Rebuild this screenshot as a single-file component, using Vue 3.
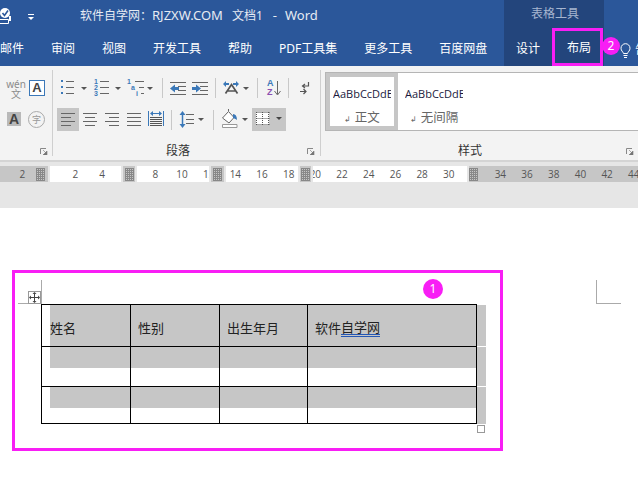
<template>
  <div class="word">
    <!-- title bar and tabs -->
    <header class="top">
      <div class="top-main">
        <div class="title-row">
          <svg class="qat" width="80" height="33" viewBox="0 0 80 33">
            <circle cx="5" cy="13" r="5" fill="#fff" />
            <path d="M2.5 13l2 2.5 3.5-5" fill="none" stroke="#2b579a" stroke-width="1.6" />
            <path d="M0 19.5h8.5v4H0" fill="none" stroke="#fff" />
            <path d="M9 16h2v5H9z" fill="#fff" />
            <path d="M28 14h6v1h-6z" fill="#fff" />
            <path d="M28 17h6l-3 3z" fill="#fff" />
          </svg>
          <span class="title">软件自学网：<span class="latin">RJZXW.COM</span><span class="doc-name">文档1</span><span class="latin dash">-</span><span class="latin">Word</span></span>
        </div>
        <nav class="tabs">
          <span v-for="t in tabs" :key="t" class="tab">{{ t }}</span>
        </nav>
      </div>

      <div class="context">
        <div class="context-title">表格工具</div>
        <div class="context-tabs">
          <span class="tab design">设计</span>
          <span class="tab layout-tab">
            布局
            <i class="badge badge-two">2</i>
          </span>
        </div>
      </div>

      <div class="tell">
        <svg width="11" height="16" viewBox="0 0 11 16">
          <path d="M3.5 10.5C3 8.500 1 8 1 5.200a4.500 4.500 0 0 1 9 0C10 8 8 8.500 7.500 10.500z" fill="none" stroke="#fff" />
          <path d="M3.500 12.500h4M4 14.500h3" stroke="#fff" />
        </svg>
        <span class="tell-text">告诉我</span>
      </div>
    </header>

    <!-- ribbon -->
    <section class="ribbon">
      <div class="group font-group">
        <div class="tool-row first">
          <span class="wen"><b>wén</b><em>文</em></span>
          <span class="char-box">A</span>
        </div>
        <div class="tool-row">
          <span class="char-shade">A</span>
          <span class="char-circle">字</span>
        </div>
        <div class="group-foot">
          <span></span><span></span>
          <svg class="launcher" width="8" height="7" viewBox="0 0 8 7">
            <path d="M.5 6V.5H6" fill="none" stroke="#888" />
            <path d="M3 2l3 3M7 3v4H3z" fill="#777" stroke="#777" stroke-width=".6" />
          </svg>
        </div>
      </div>

      <div class="group para-group">
        <div class="tool-row first">
          <svg width="34" height="23" viewBox="0 0 34 23">
            <path d="M5 4h2v2H5zM5 10h2v2H5zM5 16h2v2H5z" fill="#3b78b8" />
            <path d="M10 5.500h8M10 11.500h8M10 17.500h8" stroke="#666" />
            <path d="M25 11h6l-3 3z" fill="#555" />
          </svg>
          <svg width="34" height="23" viewBox="0 0 34 23">
            <text class="mini" x="4" y="8">1</text>
            <text class="mini" x="4" y="14">2</text>
            <text class="mini" x="4" y="20">3</text>
            <path d="M10 5.500h9M10 11.500h9M10 17.500h9" stroke="#666" />
            <path d="M25 11h6l-3 3z" fill="#555" />
          </svg>
          <svg width="34" height="23" viewBox="0 0 34 23">
            <text class="mini" x="3" y="8">1</text>
            <text class="mini" x="7" y="14">a</text>
            <text class="mini" x="12" y="20">i</text>
            <path d="M11 5.500h9M15 11.500h5M17 17.500h3" stroke="#666" />
            <path d="M23 11h6l-3 3z" fill="#555" />
          </svg>
          <svg width="8" height="23" viewBox="0 0 8 23"><path d="M4.500 2v20" stroke="#c8c8c8" /></svg>
          <svg width="23" height="23" viewBox="0 0 23 23">
            <path d="M4 6.500h16M12 10.500h8M12 14.500h8M4 18.500h16" stroke="#666" />
            <path d="M4 12.500l5-4v2.500h4v3H9v2.500z" fill="#3b78b8" />
          </svg>
          <svg width="22" height="23" viewBox="0 0 22 23">
            <path d="M3 6.500h16M11 10.500h8M11 14.500h8M3 18.500h16" stroke="#666" />
            <path d="M12 12.500l-5-4v2.500H3v3h4v2.500z" fill="#3b78b8" />
          </svg>
          <svg width="8" height="23" viewBox="0 0 8 23"><path d="M4.500 2v20" stroke="#c8c8c8" /></svg>
          <svg width="34" height="23" viewBox="0 0 34 23">
            <path d="M6.500 17.500l6-9 6 9M8.500 15h8" fill="none" stroke="#555" stroke-width="1.700" />
            <path d="M4 8l3-3v2h3v2H7v2zM20 8l-3-3v2h-3v2h3v2z" fill="#3b78b8" />
            <path d="M24 11h6l-3 3z" fill="#555" />
          </svg>
          <svg width="8" height="23" viewBox="0 0 8 23"><path d="M4.500 2v20" stroke="#c8c8c8" /></svg>
          <svg width="23" height="23" viewBox="0 0 23 23">
            <text class="sort-a" x="6" y="10">A</text>
            <text class="sort-z" x="6" y="19">Z</text>
            <path d="M16.500 5v13" stroke="#666" />
            <path d="M13.500 15l3 4 3-4" fill="none" stroke="#666" />
          </svg>
          <svg width="8" height="23" viewBox="0 0 8 23"><path d="M4.500 2v20" stroke="#c8c8c8" /></svg>
          <svg width="24" height="23" viewBox="0 0 24 23">
            <path d="M16.500 6v4H11M13 8l-2.500 2 2.500 2" fill="none" stroke="#555" stroke-width="1.200" />
            <path d="M8 15.500h6M11.500 13l2.500 2.500-2.500 2.500" fill="none" stroke="#555" stroke-width="1.200" />
          </svg>
        </div>

        <div class="tool-row">
          <svg class="on" width="22" height="23" viewBox="0 0 22 23">
            <path d="M4 5.500h14M4 9.500h10M4 13.500h14M4 17.500h10" stroke="#666" />
          </svg>
          <svg width="22" height="23" viewBox="0 0 22 23">
            <path d="M4 5.500h14M6 9.500h10M4 13.500h14M6 17.500h10" stroke="#666" />
          </svg>
          <svg width="22" height="23" viewBox="0 0 22 23">
            <path d="M4 5.500h14M8 9.500h10M4 13.500h14M8 17.500h10" stroke="#666" />
          </svg>
          <svg width="22" height="23" viewBox="0 0 22 23">
            <path d="M4 5.500h14M4 9.500h14M4 13.500h14M4 17.500h14" stroke="#666" />
          </svg>
          <svg width="22" height="23" viewBox="0 0 22 23">
            <path d="M3.500 3v15M18.500 3v15" stroke="#3b78b8" />
            <path d="M5 5.500l3-2.500v2h6V3l3 2.500L14 8V6H8v2z" fill="#3b78b8" />
            <path d="M5 9.500h12M5 11.500h12M5 13.500h12M5 15.500h12M5 17.500h12" stroke="#555" />
          </svg>
          <svg width="8" height="23" viewBox="0 0 8 23"><path d="M4.500 2v20" stroke="#c8c8c8" /></svg>
          <svg width="34" height="23" viewBox="0 0 34 23">
            <path d="M7.500 5v13" stroke="#3b78b8" stroke-width="1.500" />
            <path d="M4.500 7l3-4 3 4zM4.500 16l3 4 3-4z" fill="#3b78b8" />
            <path d="M11 6.500h8M11 11.500h8M11 15.500h8" stroke="#666" />
            <path d="M23 10h6l-3 3z" fill="#555" />
          </svg>
          <svg width="8" height="23" viewBox="0 0 8 23"><path d="M4.500 2v20" stroke="#c8c8c8" /></svg>
          <svg width="33" height="23" viewBox="0 0 33 23">
            <path d="M5.500 10l6-6.500 5.500 6-5 5.500z" fill="#fff" stroke="#666" />
            <path d="M11.500 3V1" stroke="#666" />
            <path d="M16 6c2.500 0 4 2 4 6-1.500-1-3-2-4-2z" fill="#3b78b8" />
            <path d="M5.500 16.500h14.500v3H5.500z" fill="#fff" stroke="#999" />
            <path d="M25 10h6l-3 3z" fill="#555" />
          </svg>
          <span class="gap"></span>
          <svg class="on" width="34" height="23" viewBox="0 0 34 23">
            <path d="M4 4h13v13H4z" fill="#fff" />
            <path d="M4.500 4.500h13M4.500 10.500h13M4.500 16.500h13M4.500 4v13M10.500 4v13M16.500 4v13" stroke="#555" stroke-dasharray="1 1" fill="none" />
            <path d="M24 9h6l-3 3z" fill="#444" />
          </svg>
        </div>

        <div class="group-foot para-foot">
          <span></span>
          <span class="group-name">段落</span>
          <svg class="launcher" width="8" height="7" viewBox="0 0 8 7">
            <path d="M.5 6V.5H6" fill="none" stroke="#888" />
            <path d="M3 2l3 3M7 3v4H3z" fill="#777" stroke="#777" stroke-width=".6" />
          </svg>
        </div>
      </div>

      <div class="group style-group">
        <div class="gallery">
          <div class="style-tile selected">
            <div class="sample">AaBbCcDdE</div>
            <div class="style-name"><i>↲</i>正文</div>
          </div>
          <div class="style-tile">
            <div class="sample">AaBbCcDdE</div>
            <div class="style-name"><i>↲</i>无间隔</div>
          </div>
        </div>
        <div class="group-foot style-foot">
          <span></span>
          <span class="group-name">样式</span>
          <svg class="launcher" width="8" height="7" viewBox="0 0 8 7">
            <path d="M.5 6V.5H6" fill="none" stroke="#888" />
            <path d="M3 2l3 3M7 3v4H3z" fill="#777" stroke="#777" stroke-width=".6" />
          </svg>
        </div>
      </div>
    </section>

    <!-- ruler -->
    <div class="ruler-area">
      <div class="ruler">
        <div
          v-for="(s, i) in rulerSegs"
          :key="i"
          class="seg"
          :class="{ grey: s.grey, center: s.center }"
          :style="{ width: s.w + 'px' }"
        >
          <i v-if="s.mark === 'start'" class="mark"></i>
          <div v-if="s.nums" class="nums" :style="{ marginLeft: s.off + 'px' }">
            <span v-for="n in s.nums" :key="n">{{ n }}</span>
          </div>
          <i v-if="s.mark === 'end'" class="mark"></i>
        </div>
      </div>
    </div>

    <!-- document -->
    <main class="page">
      <i class="page-corner"></i>
      <div class="frame">
        <i class="guide guide-v"></i>
        <i class="guide guide-h"></i>
        <span class="move-handle">
          <svg width="11" height="11" viewBox="0 0 11 11">
            <path d="M5.500 1v9M1 5.500h9" stroke="#444" />
            <path d="M5.500 0l2 2h-4zM5.500 11l2-2h-4zM0 5.500l2-2v4zM11 5.500l-2-2v4z" fill="#444" />
          </svg>
        </span>
        <i class="badge badge-one">1</i>

        <div class="doc-table">
          <template v-for="(row, r) in rows" :key="r">
            <div
              v-for="(cell, c) in row"
              :key="c"
              class="cell"
              :class="[`row-${r}`, `col-${c}`]"
            >
              <template v-if="cell === '软件自学网'">软件<span class="typo">自学网</span></template>
              <template v-else>{{ cell }}</template>
            </div>
            <div class="cell-end" :class="`row-${r}`"></div>
          </template>
        </div>
        <div class="resize-handle"></div>
      </div>
    </main>
  </div>
</template>

<script setup>
const tabs = ["邮件", "审阅", "视图", "开发工具", "帮助", "PDF工具集", "更多工具", "百度网盘"];

const rows = [
  ["姓名", "性别", "出生年月", "软件自学网"],
  ["", "", "", ""],
  ["", "", "", ""],
];

// ruler pieces, left to right
const rulerSegs = [
  { w: 48, grey: true, off: 9, nums: ["2"], mark: "end" },
  { w: 71, off: 12, nums: ["2", "4"] },
  { w: 12, grey: true, center: true, mark: "end" },
  { w: 72, off: 5, nums: ["8", "10", "12"] },
  { w: 13, grey: true, center: true, mark: "end" },
  { w: 72, off: -4, nums: ["14", "16", "18"] },
  { w: 11, grey: true, center: true, mark: "end" },
  { w: 154, off: -11, nums: ["20", "22", "24", "26", "28", "30"] },
  { w: 169, grey: true, off: 9, nums: ["34", "36", "38", "40", "42", "44"], mark: "start" },
];
</script>

<style>
html,
body {
  margin: 0;
  background: #fff;
}
</style>

<style scoped>
.word {
  width: 638px;
  height: 490px;
  overflow: hidden;
  display: flex;
  flex-direction: column;
  font-family: "Noto Sans", "Noto Sans CJK SC", sans-serif;
  font-size: 12px;
}

/* title bar + tabs */
.top {
  display: flex;
  height: 66px;
  flex: none;
  background: #2b579a;
  color: #fff;
}

.top-main {
  width: 504px;
  flex: none;
}

.title-row {
  display: flex;
  height: 33px;
}

.qat {
  flex: none;
}

.title {
  line-height: 30px;
  white-space: nowrap;
  color: #e6ebf3;
}

.latin {
  font-size: 13px;
}

.doc-name {
  margin-left: 9px;
}

.dash {
  margin: 0 8px 0 10px;
}

.tabs {
  display: flex;
  gap: 27px;
  height: 33px;
  line-height: 31px;
  white-space: nowrap;
}

.context {
  width: 100px;
  flex: none;
  background: #23457c;
}

.context-title {
  height: 33px;
  line-height: 28px;
  padding-left: 27px;
  color: #a7b6d0;
}

.context-tabs {
  display: flex;
  line-height: 31px;
}

.design {
  width: 48px;
  padding-left: 12px;
  box-sizing: border-box;
}

.layout-tab {
  position: relative;
  width: 51px;
  height: 38px;
  margin-top: -5px;
  box-sizing: border-box;
  border: 3px solid #f81ef5;
  padding-left: 12px;
  line-height: 33px;
  background: #23457c;
}

.badge {
  position: absolute;
  display: block;
  border-radius: 50%;
  background: #f81ef5;
  color: #fff;
  text-align: center;
  font-style: normal;
  font-size: 12px;
}

.badge-two {
  left: 47px;
  top: 6px;
  width: 18px;
  height: 18px;
  line-height: 18px;
}

.tell {
  display: flex;
  align-items: flex-start;
  overflow: hidden;
  flex: 1;
  padding: 43px 0 0 16px;
}

.tell svg {
  flex: none;
}

.tell-text {
  margin: -3px 0 0 4px;
  white-space: nowrap;
}

/* ribbon */
.ribbon {
  display: flex;
  height: 94px;
  flex: none;
  background: #f3f3f3;
  border-bottom: 2px solid #d4d4d4;
}

.group {
  box-sizing: border-box;
  height: 86px;
  margin-top: 4px;
  padding-top: 6px;
  border-right: 1px solid #cfcfcf;
}

.font-group {
  width: 53px;
}

.para-group {
  width: 268px;
  padding-left: 3px;
}

.style-group {
  flex: 1;
  padding: 2px 0 0 4px;
  border-right: none;
}

.tool-row {
  display: flex;
  height: 23px;
}

.tool-row.first {
  margin-bottom: 9px;
}

.para-group .tool-row:not(.first) {
  padding-left: 1px;
}

.on {
  background: #c6c6c6;
}

.gap {
  width: 2px;
}

.mini {
  font-family: "Liberation Sans", sans-serif;
  font-size: 7px;
  font-weight: 700;
  fill: #3b78b8;
}

.sort-a,
.sort-z {
  font-family: "Liberation Sans", sans-serif;
  font-size: 9px;
  font-weight: 700;
  fill: #3b78b8;
}

.sort-z {
  fill: #8a4fb0;
}

.wen {
  display: flex;
  flex-direction: column;
  align-items: center;
  width: 24px;
  margin: 3px 0 0 4px;
  color: #8c8c8c;
  line-height: 10px;
}

.wen b {
  font-weight: 400;
  font-size: 10px;
}

.wen em {
  font-style: normal;
  font-size: 10px;
}

.char-box {
  width: 14px;
  height: 14px;
  margin: 4px 0 0 1px;
  border: 1px solid #3b78b8;
  background: #fff;
  color: #444;
  font: 700 13px/14px "Liberation Sans", sans-serif;
  text-align: center;
  box-sizing: content-box;
}

.char-shade {
  width: 14px;
  height: 14px;
  margin: 4px 0 0 7px;
  background: #b9b9b9;
  color: #444;
  font: 700 14px/14px "Liberation Sans", sans-serif;
  text-align: center;
}

.char-circle {
  width: 15px;
  height: 15px;
  margin: 3px 0 0 7px;
  border: 1px solid #aaa;
  border-radius: 50%;
  color: #999;
  font-size: 9px;
  line-height: 15px;
  text-align: center;
}

.group-foot {
  display: grid;
  grid-template-columns: 1fr auto 1fr;
  align-items: center;
  height: 14px;
  margin-top: 13px;
  padding-right: 4px;
}

.para-foot {
  grid-template-columns: 110px auto 1fr;
  padding-right: 5px;
}

.style-foot {
  grid-template-columns: 137px auto 1fr;
  margin-left: -4px;
}

.group-name {
  color: #333;
  line-height: 14px;
}

.launcher {
  justify-self: end;
}

/* styles gallery */
.gallery {
  display: flex;
  box-sizing: border-box;
  height: 59px;
  border: 1px solid #b5b5b5;
  border-right: none;
  background: #fff;
}

.style-tile {
  width: 72px;
  height: 57px;
  box-sizing: border-box;
  padding: 11px 0 0 7px;
}

.style-tile.selected {
  padding: 7px 0 0 3px;
  border: 4px solid #c6c6c6;
}

.sample {
  width: 58px;
  overflow: hidden;
  white-space: nowrap;
  font-size: 11px;
  line-height: 20px;
  color: #1a1a3c;
  font-family: "Open Sans", sans-serif;
}

.style-name {
  margin-top: 6px;
  padding-left: 11px;
  color: #666;
  font-size: 12.5px;
  line-height: 16px;
  white-space: nowrap;
}

.style-tile:not(.selected) .style-name {
  padding-left: 5px;
}

.style-name i {
  font-family: "DejaVu Sans", sans-serif;
  font-style: normal;
  font-size: 8px;
  margin-right: 4px;
}

/* ruler */
.ruler-area {
  flex: none;
  height: 46px;
  padding-top: 4px;
  box-sizing: border-box;
  background: #e6e6e6;
}

.ruler {
  display: flex;
  gap: 2px;
  height: 16px;
}

.seg {
  display: flex;
  align-items: center;
  flex: none;
  overflow: hidden;
  background: #fff;
}

.seg.grey {
  background: #c6c6c6;
}

.seg.center {
  justify-content: center;
}

.nums {
  display: flex;
  flex: none;
}

.nums span {
  width: 26.7px;
  text-align: center;
  font: 10px/16px "Open Sans", sans-serif;
  color: #555;
}

.mark {
  flex: none;
  width: 9px;
  height: 13px;
  background-image:
    linear-gradient(#888 1px, transparent 1px),
    linear-gradient(90deg, #888 1px, transparent 1px);
  background-size: 2px 2px;
}

/* page */
.page {
  position: relative;
  flex: 1;
  padding: 62px 0 0 12px;
  background: #fff;
}

.page-corner {
  position: absolute;
  left: 596px;
  top: 72px;
  width: 24px;
  height: 23px;
  border-left: 1px solid #aaa;
  border-bottom: 1px solid #aaa;
}

.frame {
  position: relative;
  box-sizing: border-box;
  width: 491px;
  height: 181px;
  padding: 31px 0 0 26px;
  border: 3px solid #f81ef5;
}

.guide {
  position: absolute;
  background: #aaa;
}

.guide-v {
  left: 26px;
  top: 7px;
  width: 1px;
  height: 24px;
}

.guide-h {
  left: 3px;
  top: 30px;
  width: 24px;
  height: 1px;
}

.move-handle {
  position: absolute;
  left: 13px;
  top: 18px;
  width: 11px;
  height: 11px;
  border: 1px solid #999;
  background: #fff;
  line-height: 0;
}

.badge-one {
  left: 408px;
  top: 6px;
  width: 20px;
  height: 20px;
  line-height: 20px;
}

/* table */
.doc-table {
  display: grid;
  grid-template-columns: 90px 89px 88px 169px 9px;
  grid-template-rows: 43px 40px 37px;
  font-family: "Noto Sans CJK SC", sans-serif;
  font-size: 13px;
  color: #222;
}

.cell {
  display: flex;
  align-items: center;
  box-sizing: border-box;
  padding: 3px 0 0 7px;
  border-right: 1px solid #000;
  border-bottom: 1px solid #000;
  background: linear-gradient(#c6c6c6, #c6c6c6) no-repeat right top / 100% 21px;
}

.cell.row-0 {
  border-top: 1px solid #000;
  background-size: 100% 100%;
}

.cell.col-0 {
  border-left: 1px solid #000;
  padding-left: 8px;
  background-size: calc(100% - 8px) 21px;
}

.cell.row-0.col-0 {
  background-size: calc(100% - 8px) 100%;
}

.cell-end {
  box-sizing: border-box;
  border-bottom: 1px solid #fff;
  background: #c6c6c6;
}

.cell-end.row-0 {
  border-top: 1px solid #fff;
}

.cell-end.row-2 {
  border-bottom: none;
}

.typo {
  display: inline-block;
  line-height: 14px;
  margin-bottom: -2px;
  border-bottom: 3px double #2457b5;
}

.resize-handle {
  box-sizing: border-box;
  width: 8px;
  height: 8px;
  margin: 1px 0 0 436px;
  border: 1px solid #999;
}
</style>
